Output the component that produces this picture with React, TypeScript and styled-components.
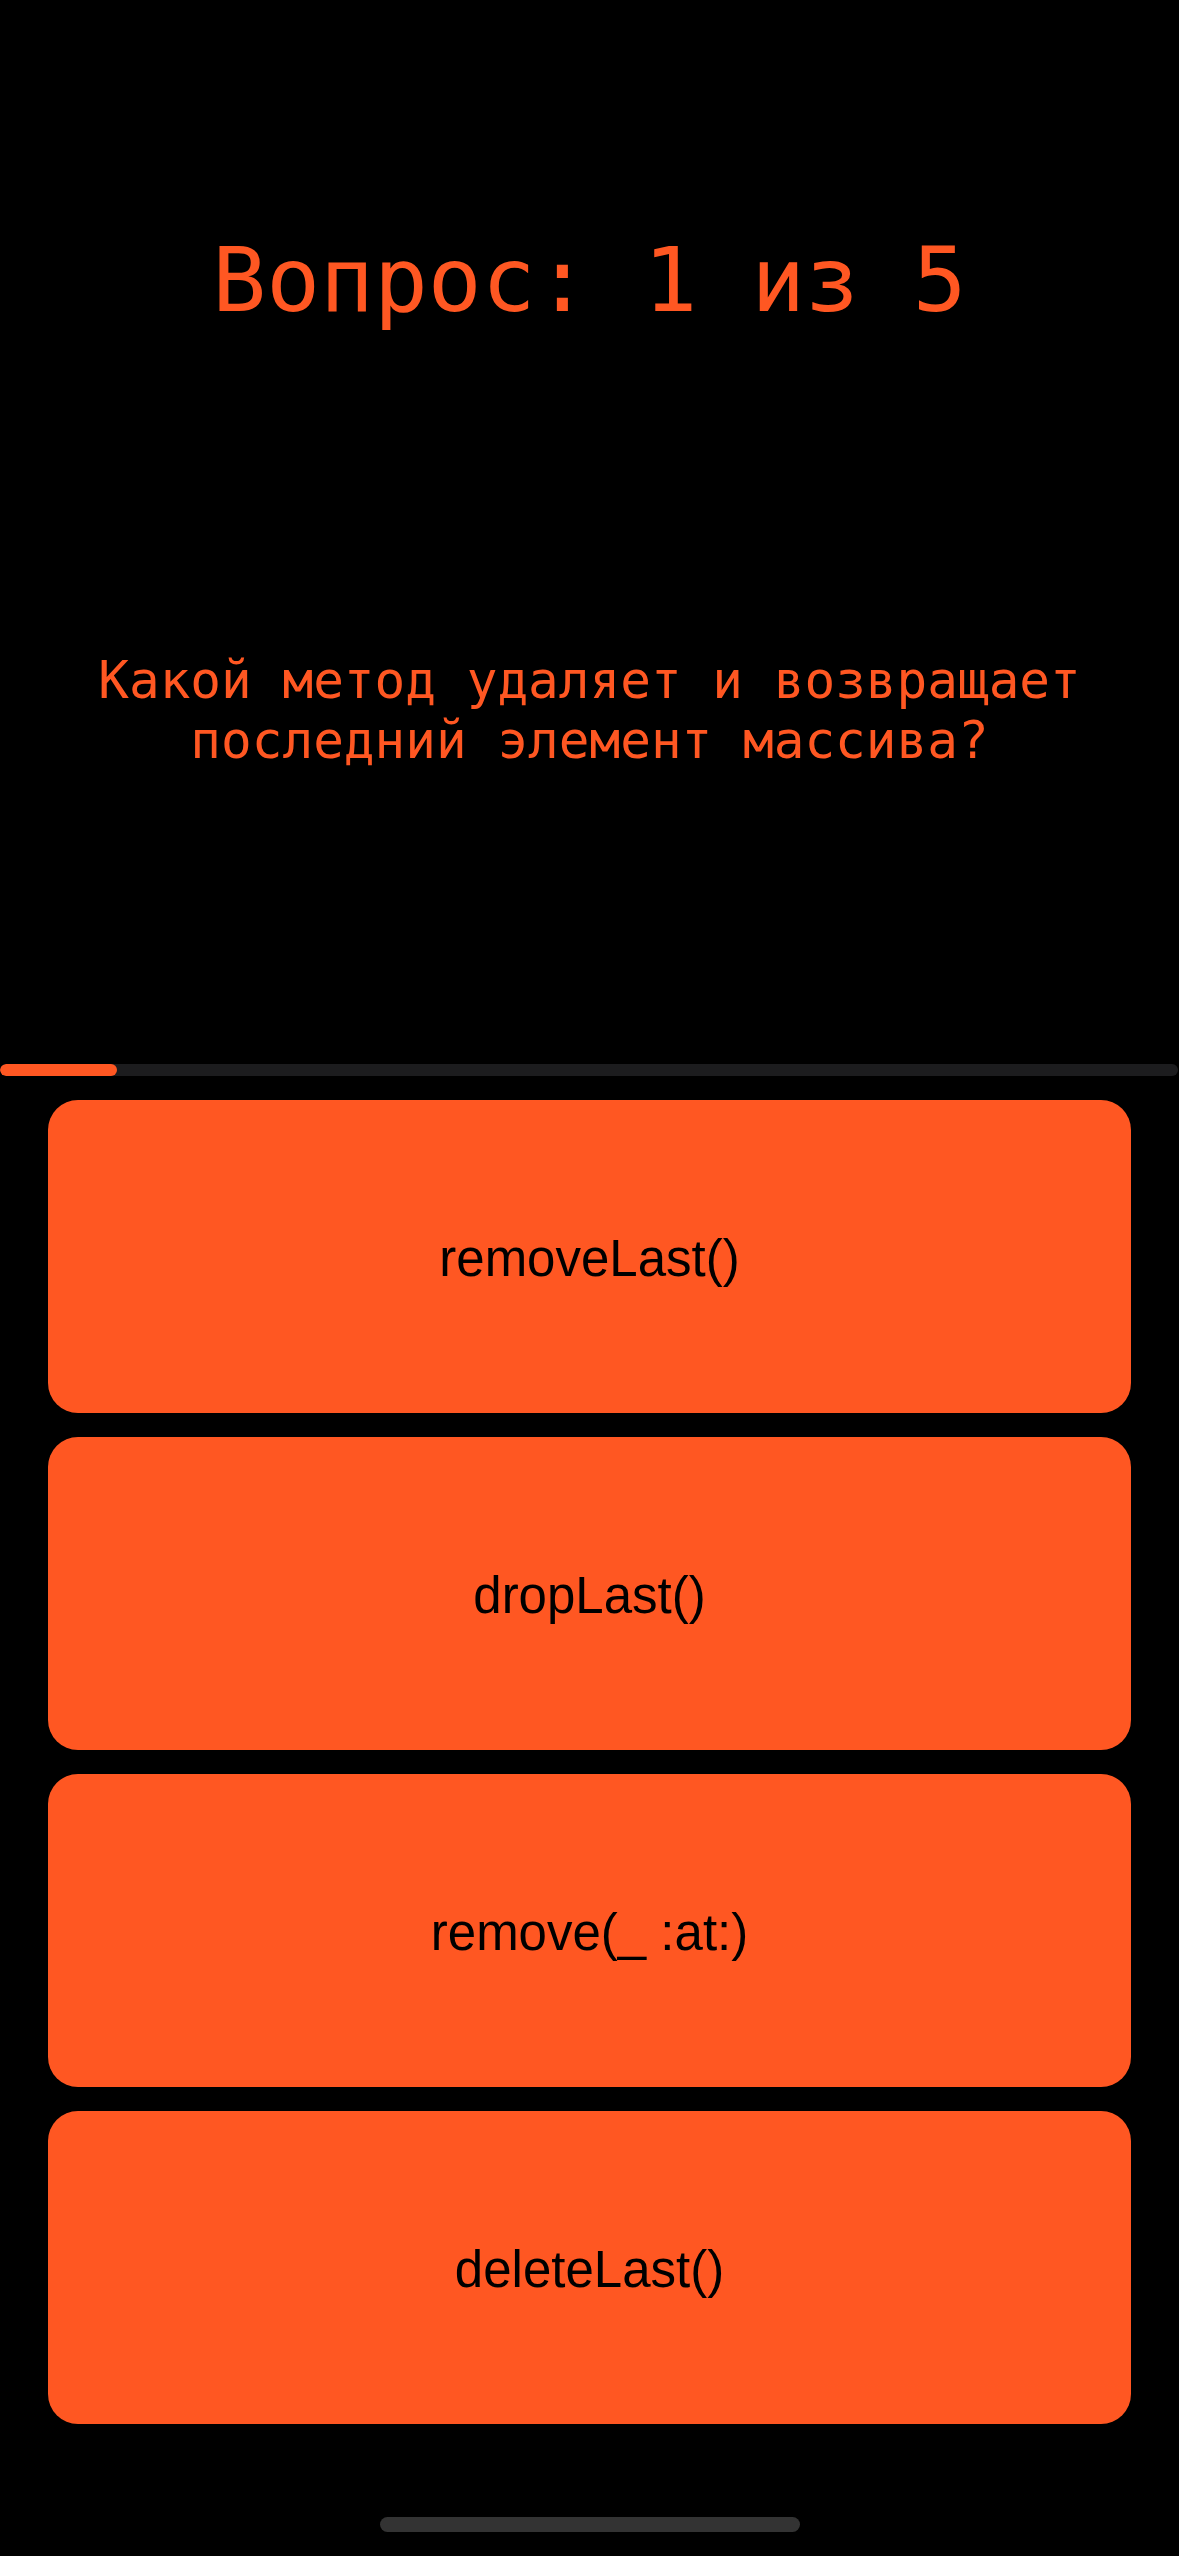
import React from "react";
import styled, { createGlobalStyle } from "styled-components";

const Global = createGlobalStyle`
  html, body { margin: 0; padding: 0; background: #000; }
  #root { width: 1179px; }
`;

const ORANGE = "#FF5722";

const Screen = styled.div`
  position: relative;
  width: 1179px;
  height: 2556px;
  background: #000;
  display: flex;
  flex-direction: column;
  overflow: hidden;
`;

const Title = styled.h1`
  margin: 230px 0 0;
  height: 100px;
  font-family: "DejaVu Sans Mono", "Liberation Mono", monospace;
  font-weight: 400;
  font-size: 89.5px;
  line-height: 100px;
  color: ${ORANGE};
  text-align: center;
`;

const Question = styled.p`
  margin: 321px 40px 0;
  font-family: "DejaVu Sans Mono", "Liberation Mono", monospace;
  font-size: 51px;
  line-height: 60px;
  color: ${ORANGE};
  text-align: center;
`;

const Track = styled.div`
  margin-top: 293px;
  height: 12px;
  width: 1178px;
  border-radius: 6px;
  background: #1c1c1e;
  overflow: hidden;
`;

const Fill = styled.div`
  height: 100%;
  border-radius: 6px;
  background: ${ORANGE};
`;

const Answers = styled.div`
  margin: 24px 48px 0;
  display: flex;
  flex-direction: column;
  gap: 24px;
`;

const Answer = styled.button`
  height: 313px;
  border: none;
  border-radius: 30px;
  background: ${ORANGE};
  color: #000;
  font-family: "Liberation Sans", Arial, sans-serif;
  font-size: 51px;
  display: flex;
  align-items: center;
  justify-content: center;
  padding: 4px 0 0;
  cursor: pointer;
`;

const HomeIndicator = styled.div`
  position: absolute;
  left: 380px;
  top: 2517px;
  width: 420px;
  height: 15px;
  border-radius: 8px;
  background: #333333;
`;

const answers = ["removeLast()", "dropLast()", "remove(_ :at:)", "deleteLast()"];

export default function App() {
  const progress = 117 / 1178;
  return (
    <>
      <Global />
      <Screen>
        <Title>Вопрос: 1 из 5</Title>
        <Question>
          Какой метод удаляет и возвращает последний элемент массива?
        </Question>
        <Track>
          <Fill style={{ width: `${progress * 100}%` }} />
        </Track>
        <Answers>
          {answers.map((a) => (
            <Answer key={a}>{a}</Answer>
          ))}
        </Answers>
        <HomeIndicator />
      </Screen>
    </>
  );
}
